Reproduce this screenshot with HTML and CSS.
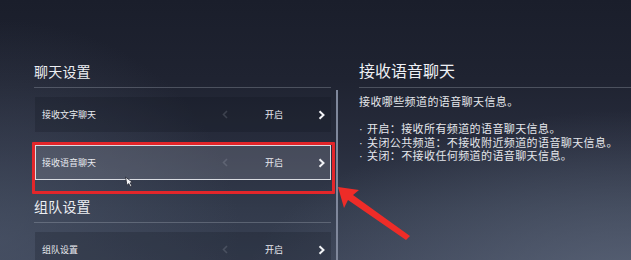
FILE: index.html
```html
<!DOCTYPE html>
<html lang="zh">
<head>
<meta charset="utf-8">
<link rel="stylesheet" href="styles.css">
</head>
<body>
<div class="screen">
  <div class="left">
    <div class="section-title">聊天设置</div>
    <div class="row">
      <span class="label">接收文字聊天</span>
      <svg class="prev" viewBox="0 0 6 9" width="6" height="9"><polyline points="5,1 1.5,4.5 5,8" /></svg>
      <span class="value">开启</span>
      <svg class="next" viewBox="0 0 7 10" width="7" height="10"><polyline points="1.5,1.2 5.5,5 1.5,8.8" /></svg>
    </div>
    <div class="row row-active">
      <span class="label">接收语音聊天</span>
      <svg class="prev" viewBox="0 0 6 9" width="6" height="9"><polyline points="5,1 1.5,4.5 5,8" /></svg>
      <span class="value">开启</span>
      <svg class="next" viewBox="0 0 7 10" width="7" height="10"><polyline points="1.5,1.2 5.5,5 1.5,8.8" /></svg>
    </div>
    <div class="section-title section-gap">组队设置</div>
    <div class="row">
      <span class="label">组队设置</span>
      <svg class="prev" viewBox="0 0 6 9" width="6" height="9"><polyline points="5,1 1.5,4.5 5,8" /></svg>
      <span class="value">开启</span>
      <svg class="next" viewBox="0 0 7 10" width="7" height="10"><polyline points="1.5,1.2 5.5,5 1.5,8.8" /></svg>
    </div>
  </div>
  <div class="scrollbar"></div>
  <div class="right">
    <div class="detail-title">接收语音聊天</div>
    <div class="detail-body">
      <p>接收哪些频道的语音聊天信息。</p>
      <p class="blank">&nbsp;</p>
      <p><span class="dot">·</span>开启：接收所有频道的语音聊天信息。</p>
      <p><span class="dot">·</span>关闭公共频道：不接收附近频道的语音聊天信息。</p>
      <p><span class="dot">·</span>关闭：不接收任何频道的语音聊天信息。</p>
    </div>
  </div>
</div>
<div class="mark-box"></div>
<svg class="cursor" viewBox="0 0 11 12" width="11" height="12"><path d="M1.5 1 L3 9.5 L4.6 7.6 L6.6 10.8 L8 10 L6.1 6.9 L8.6 6.4 Z" /></svg>
<svg class="mark-arrow" viewBox="0 0 631 260" width="631" height="260"><polygon points="338,187 359,190 353,195 410,236 406,240 348,200 344,208" /></svg>
</body>
</html>
```

FILE: styles.css
```css
html, body {
  margin: 0;
  padding: 0;
}
body {
  width: 631px;
  height: 260px;
  overflow: hidden;
  position: relative;
  font-family: "Noto Sans CJK SC", "Noto Sans", sans-serif;
  color: #e6e8ee;
  background:
    radial-gradient(ellipse 240px 220px at 0px 240px, rgba(78, 88, 108, 0.6), rgba(78, 88, 108, 0) 100%),
    radial-gradient(ellipse 400px 190px at 640px 300px, rgba(98, 108, 128, 0.8), rgba(98, 108, 128, 0) 100%),
    linear-gradient(180deg, #1a1e2b 0%, #1f2331 30%, #272c3c 55%, #323a4b 80%, #394154 100%);
}
.screen {
  display: flex;
  height: 260px;
}
.left {
  width: 296px;
  margin-left: 35px;
  padding-top: 61px;
}
.section-title {
  font-size: 14px;
  line-height: 20px;
  padding-bottom: 6px;
  margin-left: -1px;
  border-bottom: 1px solid rgba(190, 196, 210, 0.28);
  color: #eceef2;
  letter-spacing: 0.2px;
}
.section-gap {
  margin-top: 16px;
}
.row {
  display: flex;
  align-items: center;
  height: 35px;
  box-sizing: border-box;
  margin-top: 9px;
  padding: 0 6px 0 7px;
  background: rgba(14, 17, 28, 0.22);
  font-size: 9px;
  color: #e8eaef;
}
.row-active {
  margin-top: 13px;
  background: rgba(150, 156, 170, 0.28);
  border: 1px solid #d9dce2;
  padding: 0 5px 0 6px;
}
.label {
  flex: 1;
}
.prev {
  margin-right: 37px;
  fill: none;
  stroke: rgba(200, 205, 215, 0.18);
  stroke-width: 1.6;
}
.value {
  width: 16px;
  margin-right: 37px;
  white-space: nowrap;
}
.next {
  fill: none;
  stroke: #f2f3f6;
  stroke-width: 2;
}
.scrollbar {
  width: 2px;
  margin-left: 5px;
  margin-top: 90px;
  background: #7f879b;
}
.right {
  flex: 1;
  margin-left: 21px;
  padding-top: 59px;
}
.detail-title {
  font-size: 16px;
  line-height: 22px;
  padding-bottom: 6px;
  border-bottom: 1px solid rgba(190, 196, 210, 0.28);
  color: #eef0f4;
}
.detail-body {
  margin-top: 8px;
  font-family: "Liberation Sans", "Noto Sans CJK SC", sans-serif;
  font-size: 11px;
  line-height: 13.5px;
  letter-spacing: 0.4px;
  color: #e4e6eb;
}
.detail-body p {
  margin: 0;
  white-space: nowrap;
}
.dot {
  display: inline-block;
  width: 8px;
  letter-spacing: 0;
}
.mark-box {
  position: absolute;
  left: 32px;
  top: 142px;
  width: 297px;
  height: 46px;
  border: 3px solid #e3262a;
  border-radius: 1px;
}
.cursor {
  position: absolute;
  left: 124px;
  top: 176px;
  fill: #f4f4f6;
  stroke: #2a2e3a;
  stroke-width: 0.9;
}
.mark-arrow {
  position: absolute;
  left: 0;
  top: 0;
  fill: #ee2c28;
}
```
